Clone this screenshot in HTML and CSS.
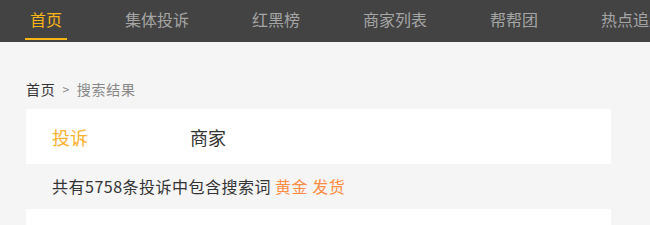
FILE: index.html
```html
<!DOCTYPE html>
<html lang="zh">
<head>
<meta charset="utf-8">
<link rel="stylesheet" href="styles.css">
</head>
<body>
<nav class="nav">
  <a class="nav-item active">首页</a>
  <a class="nav-item">集体投诉</a>
  <a class="nav-item">红黑榜</a>
  <a class="nav-item">商家列表</a>
  <a class="nav-item">帮帮团</a>
  <a class="nav-item">热点追踪</a>
</nav>
<main class="main">
  <div class="crumb"><span class="crumb-home">首页</span><span class="crumb-sep">&gt;</span><span class="crumb-cur">搜索结果</span></div>
  <div class="tabs">
    <span class="tab on">投诉</span>
    <span class="tab">商家</span>
  </div>
  <div class="summary">共有5758条投诉中包含搜索词 <span class="kw">黄金</span> <span class="kw">发货</span></div>
  <div class="list"></div>
</main>
</body>
</html>
```
FILE: styles.css
```css
html, body { margin: 0; padding: 0; }
body {
  background: #f5f5f5;
  font-family: "Noto Sans CJK SC", "Noto Sans", sans-serif;
  width: 650px;
  height: 225px;
  overflow: hidden;
}
.nav {
  height: 42px;
  background: #434343;
  display: flex;
  padding-left: 25px;
  white-space: nowrap;
  overflow: hidden;
}
.nav-item {
  display: block;
  padding: 0 5px 2px;
  margin-right: 53px;
  font-size: 16px;
  line-height: 38px;
  height: 38px;
  color: #a5a5a5;
  flex-shrink: 0;
}
.nav-item.active {
  color: #fbb516;
  border-bottom: 2px solid #fbb516;
  padding-bottom: 0;
}
.main {
  padding: 37px 39px 0 26px;
}
.crumb {
  font-size: 14px;
  line-height: 20px;
  height: 20px;
  display: flex;
  gap: 7px;
  color: #888;
  letter-spacing: 0.7px;
}
.crumb-home { color: #333; }
.crumb-sep { font-size: 12px; color: #888; }
.tabs {
  margin-top: 10px;
  background: #fff;
  height: 55px;
  display: flex;
  align-items: center;
  padding-left: 26px;
}
.tab {
  font-size: 18px;
  color: #333;
  width: 138px;
}
.tab.on { color: #f9b12d; }
.summary {
  height: 45px;
  line-height: 45px;
  padding-left: 26px;
  font-size: 16px;
  color: #333;
  letter-spacing: 0.5px;
}
.kw { color: #ff8c44; }
.list {
  background: #fff;
  height: 16px;
}
```
